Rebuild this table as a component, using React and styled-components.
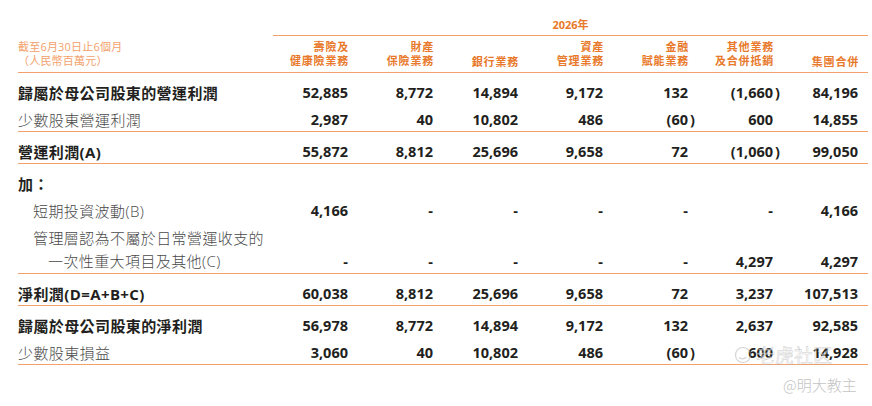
import React from 'react';
import styled, { createGlobalStyle } from 'styled-components';

const GlobalStyle = createGlobalStyle`
  body {
    margin: 0;
    background: #fff;
  }
`

const CJK = `"Open Sans", "Noto Sans CJK TC", "Noto Sans CJK SC", sans-serif`
const LINE = '#f4a06a'

const Page = styled.div`
  position: relative;
  width: 872px;
  height: 406px;
  padding: 0 4px 0 18px;
  box-sizing: border-box;
  font-family: ${CJK};
  color: #231f20;
`

const YearBar = styled.div`
  margin-left: 255px;
  height: 36px;
  box-sizing: border-box;
  display: flex;
  align-items: flex-end;
  justify-content: center;
  padding-bottom: 3px;
  border-bottom: 1.5px solid ${LINE};
  color: #e8792b;
  font-size: 11px;
  font-weight: 700;
  line-height: 14px;
`

const Grid = styled.div`
  display: grid;
  grid-template-columns: 245px repeat(7, 85px);
  padding-right: 10px;
  align-items: ${p => (p.$end ? 'end' : 'center')};
  min-height: 22px;
`

const HeadRow = styled(Grid)`
  height: 36px;
  border-bottom: 1.5px solid ${LINE};
`

const Caption = styled.div`
  font-size: 11px;
  line-height: 14.5px;
  color: #f3a16c;
  letter-spacing: 0.2px;
`

const ColHead = styled.div`
  text-align: right;
  font-size: 11px;
  line-height: 14.5px;
  font-weight: 700;
  color: #e8792b;
  letter-spacing: 0.8px;
  margin-right: -1px;
  align-self: ${p => (p.$bottom ? 'end' : 'center')};
  padding-bottom: ${p => (p.$bottom ? '3px' : '0')};
`

const Section = styled.div`
  display: flex;
  flex-direction: column;
  gap: 5px;
  padding-top: 9px;
  border-bottom: 1.5px solid ${LINE};
`

const Label = styled.div`
  font-size: 15px;
  line-height: ${p => (p.$multi ? '23px' : '22px')};
  letter-spacing: 0.4px;
  white-space: nowrap;
  font-weight: ${p => (p.$bold ? 700 : 300)};
  color: ${p => (p.$bold ? '#231f20' : '#4a4a4a')};
  padding-left: ${p => (p.$indent || 0) * 15}px;
`

const Indent = styled.span`
  display: block;
  padding-left: 15px;
`

const Num = styled.div`
  text-align: right;
  font-family: "Open Sans", sans-serif;
  font-size: 14.5px;
  font-weight: 700;
  line-height: 22px;
  white-space: nowrap;
`

const Close = styled.span`
  margin-right: -7px;
  padding-left: 2px;
`

// faint site watermark that sits over the last row
const Watermark = styled.div`
  position: absolute;
  left: 734px;
  top: 341px;
  display: flex;
  align-items: center;
  gap: 4px;
  font-size: 19px;
  font-family: "Noto Sans CJK SC", sans-serif;
  color: rgba(255, 255, 255, 0.5);
  -webkit-text-stroke: 0.5px rgba(150, 150, 150, 0.5);
  pointer-events: none;
`

const Handle = styled.div`
  position: absolute;
  left: 783px;
  top: 374px;
  font-size: 15px;
  font-family: "Noto Sans CJK SC", sans-serif;
  font-weight: 300;
  color: #c4c4c4;
`

const cols = [
  ['壽險及', '健康險業務'],
  ['財產', '保險業務'],
  ['銀行業務'],
  ['資產', '管理業務'],
  ['金融', '賦能業務'],
  ['其他業務', '及合併抵銷'],
  ['集團合併'],
]

const Value = ({ v }) => {
  if (v.startsWith('(')) {
    return (
      <Num>
        {v.slice(0, -1)}
        <Close>)</Close>
      </Num>
    )
  }
  return <Num>{v}</Num>
}

const Row = ({ label, values, bold, indent }) => (
  <Grid>
    <Label $bold={bold} $indent={indent}>{label}</Label>
    {values ? values.map((v, i) => <Value key={i} v={v} />) : null}
  </Grid>
)

const LogoMark = () => (
  <svg width="18" height="18" viewBox="0 0 18 18">
    <circle cx="9" cy="9" r="7.5" fill="none" stroke="rgba(160,160,160,0.45)" strokeWidth="1.2" />
    <path d="M5 11.5c1.5 1.6 5 2 7.5-.5" fill="none" stroke="rgba(160,160,160,0.45)" strokeWidth="1.2" />
  </svg>
)

export default function App() {
  return (
    <>
      <GlobalStyle />
      <Page>
        <YearBar>2026年</YearBar>
        <HeadRow>
          <Caption>
            截至6月30日止6個月
            <br />
            （人民幣百萬元）
          </Caption>
          {cols.map((c, i) => (
            <ColHead key={i} $bottom={c.length === 1}>
              {c.map((t, j) => (
                <div key={j}>{t}</div>
              ))}
            </ColHead>
          ))}
        </HeadRow>

        <Section>
          <Row bold label="歸屬於母公司股東的營運利潤"
            values={['52,885', '8,772', '14,894', '9,172', '132', '(1,660)', '84,196']} />
          <Row label="少數股東營運利潤"
            values={['2,987', '40', '10,802', '486', '(60)', '600', '14,855']} />
        </Section>

        <Section>
          <Row bold label="營運利潤(A)"
            values={['55,872', '8,812', '25,696', '9,658', '72', '(1,060)', '99,050']} />
        </Section>

        <Section>
          <Row bold label="加：" />
          <Row indent={1} label="短期投資波動(B)"
            values={['4,166', '-', '-', '-', '-', '-', '4,166']} />
          <Grid $end>
            <Label $multi $indent={1}>
              管理層認為不屬於日常營運收支的
              <Indent>一次性重大項目及其他(C)</Indent>
            </Label>
            {['-', '-', '-', '-', '-', '4,297', '4,297'].map((v, i) => (
              <Value key={i} v={v} />
            ))}
          </Grid>
        </Section>

        <Section>
          <Row bold label="淨利潤(D=A+B+C)"
            values={['60,038', '8,812', '25,696', '9,658', '72', '3,237', '107,513']} />
        </Section>

        <Section>
          <Row bold label="歸屬於母公司股東的淨利潤"
            values={['56,978', '8,772', '14,894', '9,172', '132', '2,637', '92,585']} />
          <Row label="少數股東損益"
            values={['3,060', '40', '10,802', '486', '(60)', '600', '14,928']} />
        </Section>

        <Watermark>
          <LogoMark />
          老虎社区
        </Watermark>
        <Handle>@明大教主</Handle>
      </Page>
    </>
  )
}
